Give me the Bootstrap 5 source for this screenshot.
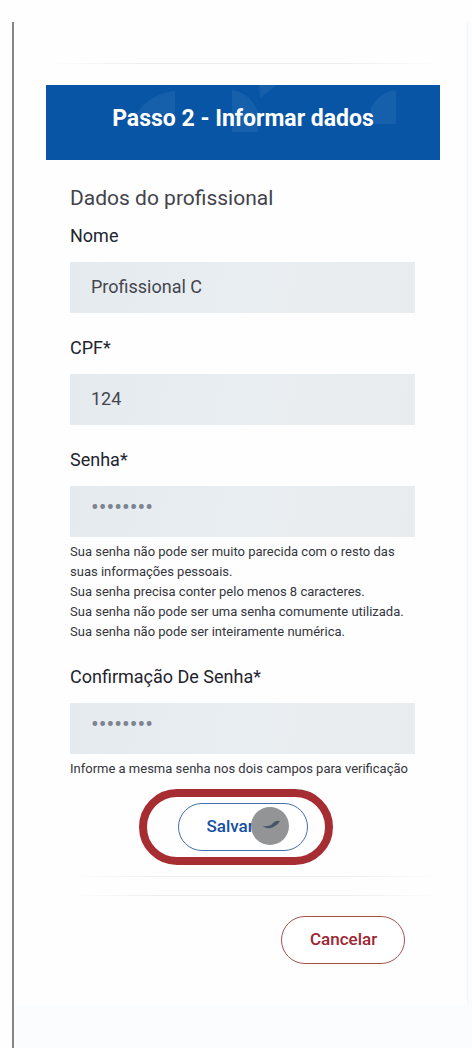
<!DOCTYPE html>
<html lang="pt-BR">
<head>
<meta charset="utf-8">
<meta name="viewport" content="width=device-width, initial-scale=1">
<title>Passo 2 - Informar dados</title>
<link href="https://cdn.jsdelivr.net/npm/bootstrap@5.3.0/dist/css/bootstrap.min.css" rel="stylesheet">
<style>
  body { font-family: Roboto, "Liberation Sans", sans-serif; color: #22242e; background: #fefefe; }
  .page-frame { margin: 22px 0 0 12px; border-left: 2px solid #858588; background: #fafcfe; min-height: calc(100vh - 22px); }
  .sheet { background: #fefefe; margin-right: 4px; padding: 41px 27px 41px 32px; border-right: 1px solid #f3f6fa; }
  .rule { height: 1px; background: linear-gradient(90deg, transparent, #ededee 25%, #ededee 75%, transparent); }
  .step-head { margin-top: 21px; height: 75px; background: #0855a6; color: #fff; }
  .step-head svg { inset: 0; width: 100%; height: 100%; }
  .step-head h1 { font-size: 23px; line-height: 28px; font-weight: 700; padding-bottom: 8px; }
  .step-body { padding: 24px 25px 0 24px; }
  .section-title { font-size: 21px; line-height: 28px; font-weight: 400; color: #42434b; margin-bottom: 12px; }
  .form-label { display: block; font-size: 18px; line-height: 24px; margin-bottom: 14px; }
  .field { margin-bottom: 23px; }
  .field .form-control { height: 51px; padding: 0 21px 2px; border: 0; border-radius: 0; background: linear-gradient(100deg, #e5eaee, #e9eef2 50%, #e9ecee); color: #44464e; font-size: 18px; }
  .field .form-control[type=password] { font-size: 23px; padding-bottom: 8px; color: #7d8490; }
  .form-text { margin-top: 5px; font-size: 13px; line-height: 20px; color: #34353d; }
  .save-row { padding: 10px 14px 0 0; }
  .ring { border: 8px solid #a62e33; border-radius: 38px; padding: 6px 17px 6px 31px; }
  .btn-pill { height: 48px; border-radius: 24px; font-size: 17px; font-weight: 500; line-height: 24px; padding: 0 28px 2px; background: #fff; }
  .btn-save { width: 130px; border-color: #4470b2; color: #1550a4; text-align: left; }
  .btn-cancel { width: 124px; border-color: #a8514e; color: #9c2630; }
  .pointer { width: 38px; height: 38px; right: 19px; top: 4px; }
  .rule-low { margin: 11px 0 0 24px; }
  .rule-foot { margin: 18px 0 0 24px; }
  .cancel-row { padding: 20px 35px 0 0; }
</style>
</head>
<body>
<div class="page-frame">
  <main class="sheet">
    <div class="rule"></div>
    <header class="step-head position-relative d-flex align-items-center justify-content-center">
      <svg class="position-absolute" viewBox="0 0 394 75" preserveAspectRatio="none" aria-hidden="true" fill="#fff" fill-opacity=".06">
        <path d="M90 29Q105 8 129 6V29Z"/><path d="M186 5Q205 8 212 27V47H186Z"/><path d="M213 0H231L214 13Z"/><path d="M325 22Q334 7 350 5V39H325Z"/>
      </svg>
      <h1 class="position-relative mb-0">Passo 2 - Informar dados</h1>
    </header>
    <form class="step-body">
      <h2 class="section-title">Dados do profissional</h2>
      <div class="field">
        <label class="form-label" for="nome">Nome</label>
        <input class="form-control" id="nome" type="text" value="Profissional C">
      </div>
      <div class="field">
        <label class="form-label" for="cpf">CPF*</label>
        <input class="form-control" id="cpf" type="text" value="124">
      </div>
      <div class="field">
        <label class="form-label" for="senha">Senha*</label>
        <input class="form-control" id="senha" type="password" value="12345678">
        <div class="form-text">Sua senha não pode ser muito parecida com o resto das suas informações pessoais.<br>Sua senha precisa conter pelo menos 8 caracteres.<br>Sua senha não pode ser uma senha comumente utilizada.<br>Sua senha não pode ser inteiramente numérica.</div>
      </div>
      <div class="field mb-0">
        <label class="form-label" for="confirma">Confirmação De Senha*</label>
        <input class="form-control" id="confirma" type="password" value="12345678">
        <div class="form-text">Informe a mesma senha nos dois campos para verificação</div>
      </div>
      <div class="save-row d-flex justify-content-center">
        <div class="ring">
          <div class="position-relative">
            <button class="btn btn-pill btn-save" type="submit">Salvar</button>
            <svg class="pointer position-absolute" viewBox="0 0 38 38" aria-hidden="true">
              <circle cx="19" cy="19" r="19" fill="#929495"/>
              <path d="M12 19Q19 20 22 16Q25 13 29 14Q27 18 24 19Q19 23 13 20Z" fill="#48556a"/>
            </svg>
          </div>
        </div>
      </div>
    </form>
    <div class="rule rule-low"></div>
    <div class="rule rule-foot"></div>
    <div class="cancel-row d-flex justify-content-end">
      <button class="btn btn-pill btn-cancel" type="button">Cancelar</button>
    </div>
  </main>
</div>
<script src="https://cdn.jsdelivr.net/npm/bootstrap@5.3.0/dist/js/bootstrap.bundle.min.js"></script>
</body>
</html>
